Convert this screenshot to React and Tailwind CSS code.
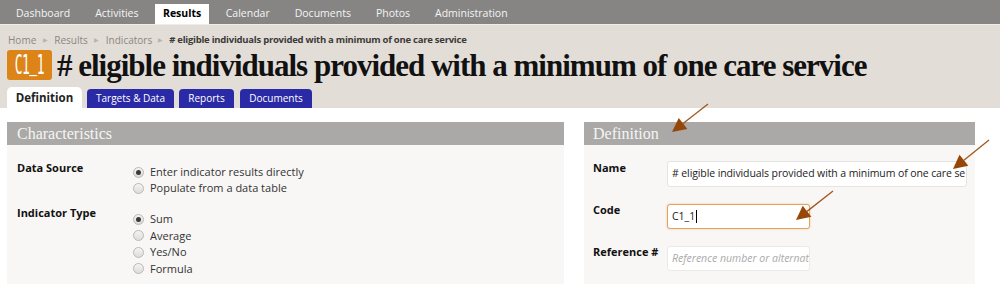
import React from "react";

const Radio = ({ checked }) => (
  <span className="inline-flex w-[11px] h-[11px] rounded-full border border-[#b9b9b9] bg-gradient-to-b from-[#f4f4f4] to-[#dcdcdc] items-center justify-center mr-[6px] shrink-0">
    {checked && <span className="w-[5px] h-[5px] rounded-full bg-[#3a3a3a]" />}
  </span>
);

const Arrow = ({ x1, y1, x2, y2 }) => {
  const dx = x2 - x1, dy = y2 - y1;
  const len = Math.hypot(dx, dy);
  const ux = dx / len, uy = dy / len;
  const hl = 14, hw = 7;
  const bx = x2 - ux * hl, by = y2 - uy * hl;
  const p1 = `${bx - uy * hw},${by + ux * hw}`;
  const p2 = `${bx + uy * hw},${by - ux * hw}`;
  return (
    <g>
      <line x1={x1} y1={y1} x2={bx} y2={by} stroke="#a3561c" strokeWidth="1.3" />
      <polygon points={`${x2},${y2} ${p1} ${p2}`} fill="#964608" />
    </g>
  );
};

export default function App() {
  const nav = ["Dashboard", "Activities", "Results", "Calendar", "Documents", "Photos", "Administration"];
  return (
    <div className="relative w-[1000px] h-[284px] overflow-hidden bg-white font-['Open_Sans',sans-serif]">
      <div className="h-[25px] bg-[#868584] flex items-end pl-[3.5px] border-b border-[#f0ece8]">
        {nav.map((n) =>
          n === "Results" ? (
            <div key={n} className="h-[20px] bg-white px-[8px] mx-[4px] flex items-center text-[10.5px] font-bold text-black">{n}</div>
          ) : (
            <div key={n} className="h-[20px] px-[12.5px] flex items-center text-[10.5px] text-[#f4f4f4]">{n}</div>
          )
        )}
      </div>
      <div className="bg-[#e3ddd7] h-[83px] px-[7px] flex flex-col">
        <div className="mt-[8px] h-[14px] flex items-center text-[10px] text-[#8a8784] pl-[1px]">
          <span>Home</span>
          <span className="mx-[6.5px] text-[6px] text-[#b8b3ae]">▶</span>
          <span>Results</span>
          <span className="mx-[6.5px] text-[6px] text-[#b8b3ae]">▶</span>
          <span>Indicators</span>
          <span className="mx-[6px] text-[6px] text-[#b8b3ae]">▶</span>
          <span className="font-bold text-[#3c3a38] text-[9.5px] tracking-[-0.25px]">
            # eligible individuals provided with a minimum of one care service
          </span>
        </div>
        <div className="mt-[2px] flex items-center h-[32px]">
          <div className="w-[45px] h-[30px] shrink-0 rounded-[3px] bg-[#dc8418] flex items-center justify-center">
            <span className="shrink-0 whitespace-nowrap text-white text-[26px] leading-none font-['DejaVu_Sans_Mono',monospace] scale-x-[0.5] tracking-[-1px]">
              C1<span className="inline-block -translate-y-[4px]">_</span>1
            </span>
          </div>
          <div className="ml-[5px] text-[31px] leading-none font-bold text-[#111] font-['Liberation_Serif',serif] tracking-[-1px] whitespace-nowrap">
            # eligible individuals provided with a minimum of one care service
          </div>
        </div>
        <div className="mt-[6px] flex items-end h-[21px]">
          <div className="h-[21px] w-[75px] bg-white rounded-t-[5px] flex items-center justify-center text-[11.5px] font-bold text-[#222]">Definition</div>
          <div className="ml-[5px] h-[19px] w-[87px] bg-[#2b2aa6] rounded-t-[4px] flex items-center justify-center text-[10px] text-white">Targets &amp; Data</div>
          <div className="ml-[5px] h-[19px] w-[55px] bg-[#2b2aa6] rounded-t-[4px] flex items-center justify-center text-[10px] text-white">Reports</div>
          <div className="ml-[6px] h-[19px] w-[72px] bg-[#2b2aa6] rounded-t-[4px] flex items-center justify-center text-[10px] text-white">Documents</div>
        </div>
      </div>
      <div className="flex pt-[14px] pl-[7px] gap-[20px]">
        <div className="w-[557px]">
          <div className="h-[23px] bg-[#aaa9a7] flex items-center px-[10px] text-[16px] text-[#f6f5f3] font-['Liberation_Serif',serif]">Characteristics</div>
          <div className="bg-[#f8f7f5] h-[200px] pt-[15px] pl-[10px] text-[11px] text-[#333]">
            <div className="flex">
              <div className="w-[116px] font-bold text-[#111]">Data Source</div>
              <div className="pt-[4px] flex flex-col">
                <div className="flex items-center h-[16px]"><Radio checked />Enter indicator results directly</div>
                <div className="flex items-center h-[16px]"><Radio />Populate from a data table</div>
              </div>
            </div>
            <div className="flex mt-[9px]">
              <div className="w-[116px] font-bold text-[#111]">Indicator Type</div>
              <div className="pt-[6px] flex flex-col">
                <div className="flex items-center h-[16.5px]"><Radio checked />Sum</div>
                <div className="flex items-center h-[16.5px]"><Radio />Average</div>
                <div className="flex items-center h-[16.5px]"><Radio />Yes/No</div>
                <div className="flex items-center h-[16.5px]"><Radio />Formula</div>
              </div>
            </div>
          </div>
        </div>
        <div className="w-[391px]">
          <div className="h-[23px] bg-[#aaa9a7] flex items-center px-[9px] text-[16px] text-[#f6f5f3] font-['Liberation_Serif',serif]">Definition</div>
          <div className="bg-[#f8f7f5] h-[200px] pt-[16px] pl-[9px] text-[11px]">
            <div className="flex">
              <div className="w-[74px] font-bold text-[#111] leading-[14px]">Name</div>
              <div className="w-[300px] h-[26px] bg-white border border-[#e6e4e1] rounded-[3px] flex items-center px-[4px] text-[10.5px] tracking-[-0.1px] text-[#222] whitespace-nowrap overflow-hidden">
                # eligible individuals provided with a minimum of one care se
              </div>
            </div>
            <div className="flex mt-[17px]">
              <div className="w-[74px] font-bold text-[#111] leading-[14px] -mt-[1px]">Code</div>
              <div className="w-[143px] h-[25px] bg-white border border-[#e3a35a] rounded-[3px] flex items-center px-[4px] text-[10.5px] text-[#222] shadow-[0_0_2px_rgba(220,140,50,0.5)]">
                C1_1<span className="w-[1px] h-[13px] bg-black ml-[1px]" />
              </div>
            </div>
            <div className="flex mt-[17px]">
              <div className="w-[74px] font-bold text-[#111] leading-[14px] -mt-[1px]">Reference #</div>
              <div className="w-[143px] h-[25px] bg-white border border-[#eceae7] rounded-[3px] flex items-center px-[4px] text-[10.5px] italic text-[#aaa] whitespace-nowrap overflow-hidden">
                Reference number or alternat
              </div>
            </div>
          </div>
        </div>
      </div>
      <svg className="absolute left-0 top-0 pointer-events-none" width="1000" height="284">
        <Arrow x1={708} y1={104} x2={672} y2={132} />
        <Arrow x1={989} y1={140} x2={953} y2={169} />
        <Arrow x1={833} y1={191} x2={796} y2={220} />
      </svg>
    </div>
  );
}
